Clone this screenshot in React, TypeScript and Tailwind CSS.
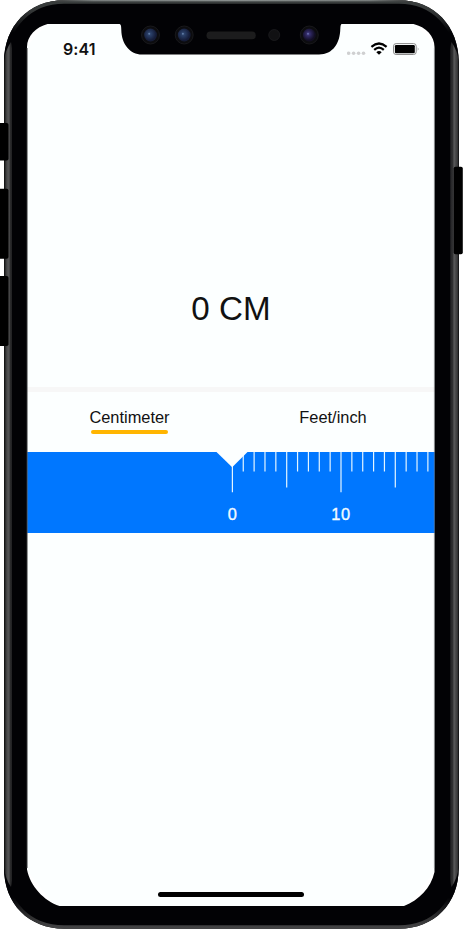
import React from "react";

const TICKS = Array.from({ length: 19 }, (_, i) => i);

function StatusBar() {
  return (
    <div className="flex h-[48px] shrink-0 items-start justify-between pl-[36px] pr-[15px] pt-[15px]">
      <span className="font-['Inter',sans-serif] text-[16px] font-semibold leading-5 tracking-[0.1px] text-[#111]">9:41</span>
      <div className="flex pt-[2px]">
        <svg width="73" height="16" viewBox="0 0 73 16">
          <g fill="#cfd0d1">
            <circle cx="1.7" cy="12.3" r="1.8" />
            <circle cx="6.6" cy="12.3" r="1.8" />
            <circle cx="11.6" cy="12.3" r="1.8" />
            <circle cx="16.5" cy="12.3" r="1.8" />
          </g>
          <g fill="none" stroke="#000" strokeWidth="2.2">
            <path d="M24.4 5.9Q32-.9 39.6 5.9" />
            <path d="M27.2 8.9Q32 4.5 36.8 8.9" />
          </g>
          <path d="M32 13.8L29.3 11.2Q32 8.9 34.7 11.2Z" />
          <rect x="46.5" y="2.6" width="22.7" height="10.9" rx="2.6" fill="none" stroke="#8b8b8b" />
          <rect x="47.9" y="4" width="19.9" height="8.2" rx="1.2" />
          <path d="M70.8 6.2Q72.2 8 70.8 9.8Z" fill="#777" />
        </svg>
      </div>
    </div>
  );
}

function Ruler() {
  return (
    <div className="relative h-[81px] shrink-0 overflow-hidden bg-[#0077ff]">
      <svg className="block" width="408" height="53" viewBox="27 452 408 53">
        <g stroke="#e4f5ff" strokeWidth="1.2">
          {TICKS.map((i) => {
            const x = 232.4 + i * 10.86;
            const end = i % 10 === 0 ? 492.3 : i % 5 === 0 ? 487.6 : 471.5;
            return <path key={i} d={`M${x} 452V${end}`} />;
          })}
        </g>
        <path d="M216.5 452H247.5L232.2 467.3Z" fill="#fcffff" />
      </svg>
      <div className="flex pl-[151px] text-[16.4px] leading-[18px] text-[#f3fbff] [-webkit-text-stroke:0.35px_#f3fbff]">
        <span className="w-[108.6px] shrink-0 text-center">0</span>
        <span className="w-[108.6px] shrink-0 text-center tracking-[0.6px]">10</span>
      </div>
    </div>
  );
}

function Lens({ x, violet }: { x: number; violet?: boolean }) {
  return (
    <g>
      <circle cx={x} cy="35" r="9" fill="#0c0c0f" stroke="#1d1d20" strokeWidth=".8" />
      <circle cx={x} cy="35" r="6.4" fill={violet ? "url(#violet)" : "url(#blue)"} />
      <circle cx={x - 1.3} cy="33.7" r="1" fill={violet ? "#6669a8" : "#5f7ba5"} />
    </g>
  );
}

const BODY =
  "M64 .3H399C434 .3 458.7 26 458.7 62V868C458.7 904 434 928.7 399 928.7H64C29 928.7 4 904 4 868V62C4 26 29 .3 64 .3Z";

function PhoneFrame() {
  return (
    <svg className="pointer-events-none absolute inset-0" width="463" height="930" viewBox="0 0 463 930">
      <defs>
        <clipPath id="body">
          <path d={BODY} />
        </clipPath>
        <linearGradient id="left">
          <stop offset="0" stopColor="#080808" />
          <stop offset=".15" stopColor="#292929" />
          <stop offset=".35" stopColor="#4a4a4b" />
          <stop offset=".6" stopColor="#555556" />
          <stop offset=".72" stopColor="#2c2c2d" />
          <stop offset=".88" stopColor="#242426" />
          <stop offset="1" stopColor="#020205" />
        </linearGradient>
        <linearGradient id="right">
          <stop offset="0" stopColor="#020205" />
          <stop offset=".15" stopColor="#252527" />
          <stop offset=".35" stopColor="#303031" />
          <stop offset=".5" stopColor="#5a5a5b" />
          <stop offset=".7" stopColor="#444445" />
          <stop offset=".85" stopColor="#3a3a3b" />
          <stop offset="1" stopColor="#111" />
        </linearGradient>
        <linearGradient id="top">
          <stop offset="0" stopColor="#333" />
          <stop offset=".12" stopColor="#8b9190" />
          <stop offset=".5" stopColor="#a1a8a7" />
          <stop offset=".88" stopColor="#8b9190" />
          <stop offset="1" stopColor="#333" />
        </linearGradient>
        <linearGradient id="rim" gradientUnits="userSpaceOnUse" x1="0" y1="0" x2="0" y2="930">
          <stop offset="0" stopColor="#3a3e3e" />
          <stop offset=".012" stopColor="#343737" />
          <stop offset=".035" stopColor="#020205" />
          <stop offset=".965" stopColor="#020205" />
          <stop offset=".988" stopColor="#333334" />
          <stop offset="1" stopColor="#48484a" />
        </linearGradient>
        <radialGradient id="blue" cx=".42" cy=".42">
          <stop offset="0" stopColor="#344c75" />
          <stop offset=".45" stopColor="#24365c" />
          <stop offset="1" stopColor="#151c38" />
        </radialGradient>
        <radialGradient id="violet" cx=".42" cy=".42">
          <stop offset="0" stopColor="#453f88" />
          <stop offset=".45" stopColor="#2a2358" />
          <stop offset="1" stopColor="#120e24" />
        </radialGradient>
      </defs>
      <path
        fill="#020205"
        fillRule="evenodd"
        d={`${BODY}M47.5 24C36 27 27 36 27 47V869.5C30 886 44 901 59.5 906H404C419 900 431 888 434.5 872V47C434.5 36 426 27 413.5 24H342C340.5 24 340.5 26 340.3 29C340 43 333 54.5 319 54.5H142C130 54.5 121.5 44 121.3 30C121.2 26 121 24 119 24Z`}
      />
      <g clipPath="url(#body)">
        <path d={BODY} fill="none" stroke="url(#rim)" strokeWidth="7" />
        <path d="M4 60Q5.5 50 11 42Q12.5 48 12.5 60V868Q12.5 881 11 887Q5.5 879 4 868Z" fill="url(#left)" />
        <path d="M458.7 60Q457 50 451.5 42Q449.5 48 449.5 60V868Q449.5 881 451.5 887Q457 879 458.7 868Z" fill="url(#right)" />
        <path d="M50 1.5Q58 .6 64 .6H399Q405 .6 413 1.5" fill="none" stroke="url(#top)" strokeWidth="1.2" />
      </g>
      <path d="M27.2 48V868" stroke="#58595b" strokeWidth=".9" />
      <path d="M434.3 48V868" stroke="#8f9394" strokeWidth=".5" />
      <g fill="#000">
        <rect x="-3" y="123" width="11.5" height="37.5" rx="1.8" />
        <rect x="-3" y="188.7" width="11.5" height="70" rx="1.8" />
        <rect x="-3" y="276" width="11.5" height="70" rx="1.8" />
        <rect x="453.7" y="166.8" width="9.1" height="87.5" rx="1.8" />
      </g>
      <Lens x={150.5} />
      <Lens x={184.2} />
      <rect x="206.5" y="31.6" width="49.3" height="7.6" rx="3.8" fill="#1c1c1d" />
      <circle cx="274.2" cy="35" r="5.5" fill="#111113" stroke="#202022" strokeWidth=".7" />
      <Lens x={309.3} violet />
    </svg>
  );
}

export default function App() {
  return (
    <div className="relative h-[930px] w-[463px] overflow-hidden bg-white pl-[27px] pt-[24px] font-['Liberation_Sans',Arial,sans-serif]">
      <main className="flex h-[882px] w-[408px] flex-col bg-[#fcffff] [clip-path:polygon(5%_0,95%_0,100%_2.5%,100%_96%,93%_100%,7%_100%,0_96%,0_2.5%)]">
        <StatusBar />
        <section className="flex h-[315px] shrink-0 items-end justify-center pb-[58px]">
          <h1 className="text-[33.2px] leading-[40px] text-[#111]">0 CM</h1>
        </section>
        <div className="h-[5px] shrink-0 bg-[#f7f7f7]" />
        <nav className="flex h-[60px] shrink-0 text-[16.4px] leading-5 text-[#111]">
          <button className="flex w-1/2 flex-col items-center pl-[1px] pt-[15px]">
            <span>Centimeter</span>
            <span className="mt-[3px] h-[3.5px] w-[77px] rounded-full bg-[#ffb500]" />
          </button>
          <button className="flex w-1/2 flex-col items-center pt-[15px]">Feet/inch</button>
        </nav>
        <Ruler />
        <div className="flex flex-1 items-end justify-center pb-[9px]">
          <div className="h-[5px] w-[146px] rounded-full bg-black" />
        </div>
      </main>
      <PhoneFrame />
    </div>
  );
}
